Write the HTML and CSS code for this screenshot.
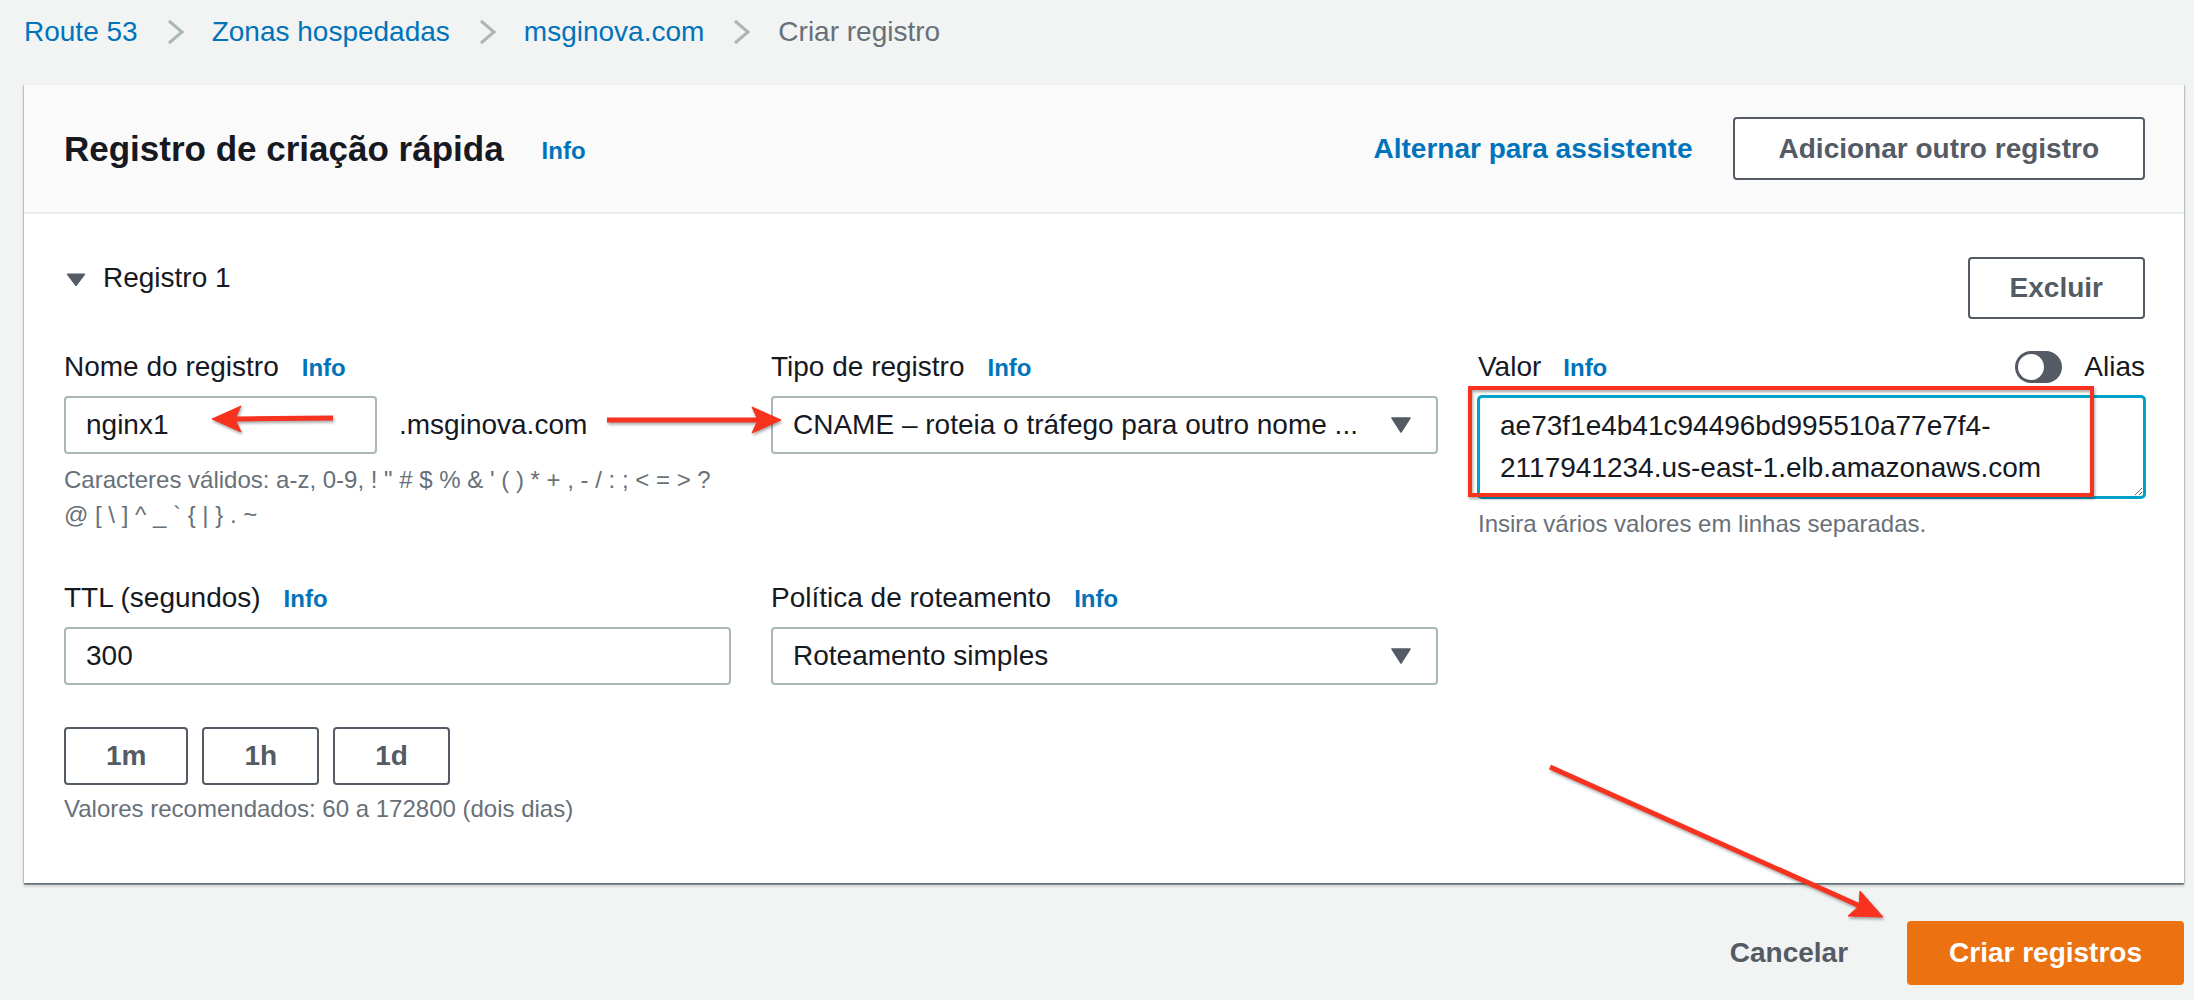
FILE: index.html
```html
<!DOCTYPE html>
<html lang="pt-BR">
<head>
<meta charset="utf-8">
<title>Criar registro</title>
<link rel="stylesheet" href="styles.css">
</head>
<body>
<div class="page">
  <nav class="crumbs">
    <a class="crumb link">Route 53</a>
    <svg class="chev" viewBox="0 0 17 26"><polyline points="2,2 15,13 2,24"/></svg>
    <a class="crumb link">Zonas hospedadas</a>
    <svg class="chev" viewBox="0 0 17 26"><polyline points="2,2 15,13 2,24"/></svg>
    <a class="crumb link">msginova.com</a>
    <svg class="chev" viewBox="0 0 17 26"><polyline points="2,2 15,13 2,24"/></svg>
    <span class="crumb current">Criar registro</span>
  </nav>

  <section class="card">
    <header class="card-head">
      <div class="title-wrap">
        <h1 class="title">Registro de criação rápida</h1>
        <a class="info">Info</a>
      </div>
      <div class="head-actions">
        <a class="link-bold">Alternar para assistente</a>
        <button class="btn btn-wide">Adicionar outro registro</button>
      </div>
    </header>

    <div class="card-body">
      <div class="rec-row">
        <div class="rec-title">
          <svg class="tri" viewBox="0 0 20 14"><polygon points="1,1 19,1 10,13"/></svg>
          <span>Registro 1</span>
        </div>
        <button class="btn">Excluir</button>
      </div>

      <div class="grid">
        <div class="field">
          <div class="label-row"><span class="label">Nome do registro</span><a class="info">Info</a></div>
          <div class="name-row">
            <input class="input name-input" value="nginx1" readonly>
            <span class="suffix">.msginova.com</span>
          </div>
          <p class="hint"><span class="nowrap">Caracteres válidos: a-z, 0-9, ! " # $ % &amp; ' ( ) * + , - / : ; &lt; = &gt; ?</span><br><span class="nowrap">@ [ \ ] ^ _ ` { | } . ~</span></p>
        </div>

        <div class="field">
          <div class="label-row"><span class="label">Tipo de registro</span><a class="info">Info</a></div>
          <div class="input select">
            <span class="select-text">CNAME – roteia o tráfego para outro nome ...</span>
            <svg class="caret" viewBox="0 0 20 16"><polygon points="1,1 19,1 10,15"/></svg>
          </div>
        </div>

        <div class="field">
          <div class="label-row spread">
            <div class="label-group"><span class="label">Valor</span><a class="info">Info</a></div>
            <div class="alias"><span class="toggle"><span class="knob"></span></span><span>Alias</span></div>
          </div>
          <textarea class="value-area" readonly>ae73f1e4b41c94496bd995510a77e7f4-
2117941234.us-east-1.elb.amazonaws.com</textarea>
          <p class="hint">Insira vários valores em linhas separadas.</p>
        </div>

        <div class="field">
          <div class="label-row"><span class="label">TTL (segundos)</span><a class="info">Info</a></div>
          <input class="input" value="300" readonly>
          <div class="quick">
            <button class="btn btn-sm">1m</button>
            <button class="btn btn-sm">1h</button>
            <button class="btn btn-sm">1d</button>
          </div>
          <p class="hint hint-quick">Valores recomendados: 60 a 172800 (dois dias)</p>
        </div>

        <div class="field">
          <div class="label-row"><span class="label">Política de roteamento</span><a class="info">Info</a></div>
          <div class="input select">
            <span class="select-text">Roteamento simples</span>
            <svg class="caret" viewBox="0 0 20 16"><polygon points="1,1 19,1 10,15"/></svg>
          </div>
        </div>
      </div>
    </div>
  </section>

  <div class="footer">
    <button class="btn-link">Cancelar</button>
    <button class="btn btn-primary">Criar registros</button>
  </div>
</div>

<svg class="annot" viewBox="0 0 2194 1000" aria-hidden="true">
  <g class="red">
    <line x1="333" y1="418" x2="234" y2="419" />
    <polygon points="212,419 241,406 235,419 241,432"/>
    <line x1="607" y1="420" x2="758" y2="420" />
    <polygon points="781,420 752,407 758,420 752,433"/>
    <line x1="1550" y1="767" x2="1860" y2="906" />
    <polygon points="1883,917 1848,916 1859,906 1860,891"/>
  </g>
  <rect class="redbox" x="1470" y="388" width="622" height="107"/>
</svg>
</body>
</html>
```

FILE: styles.css
```css
* {
  box-sizing: border-box;
  margin: 0;
  padding: 0;
}

html, body {
  background: #f2f3f3;
}

body {
  position: relative;
  width: 2194px;
  height: 1000px;
  overflow: hidden;
  font-family: "Liberation Sans", Arial, sans-serif;
  font-size: 28px;
  line-height: 42px;
  color: #16191f;
}

.page {
  padding: 11px 10px 0 24px;
}

/* breadcrumbs */
.crumbs {
  display: flex;
  align-items: center;
  height: 42px;
  white-space: nowrap;
}

.crumb.link {
  color: #0073bb;
}

.crumb.current {
  color: #687078;
}

.chev {
  width: 17px;
  height: 26px;
  margin: 0 28px 0 29px;
  fill: none;
  stroke: #aab7b8;
  stroke-width: 3;
}

/* card */
.card {
  margin-top: 31px;
  background: #fff;
  border-top: 1px solid #eaeded;
  box-shadow: 0 2px 0 0 rgba(0, 28, 36, 0.32), 0 3px 3px 0 rgba(0, 28, 36, 0.2), 1px 1px 1px 0 rgba(0, 28, 36, 0.15), -1px 1px 1px 0 rgba(0, 28, 36, 0.15);
}

.card-head {
  height: 129px;
  display: flex;
  align-items: center;
  justify-content: space-between;
  padding: 0 39px 0 40px;
  background: #fafafa;
  border-bottom: 2px solid #eaeded;
}

.title-wrap {
  display: flex;
  align-items: center;
  gap: 38px;
}

.title {
  font-size: 35px;
  font-weight: 700;
  line-height: 44px;
  color: #16191f;
}

.info {
  font-size: 24px;
  font-weight: 700;
  color: #0073bb;
}

.title-wrap .info {
  margin-top: 4px;
}

.head-actions {
  display: flex;
  align-items: center;
  gap: 40px;
}

.link-bold {
  font-weight: 700;
  color: #0073bb;
}

.btn {
  height: 62px;
  padding: 0 40px;
  border: 2px solid #545b64;
  border-radius: 4px;
  background: #fff;
  color: #545b64;
  font-family: inherit;
  font-size: 28px;
  font-weight: 700;
  line-height: 1;
  white-space: nowrap;
}

.btn-wide {
  height: 63px;
  padding: 0 44px;
}

.card-body {
  padding: 43px 39px 57px 40px;
}

.rec-row {
  display: flex;
  justify-content: space-between;
  align-items: flex-start;
}

.rec-title {
  display: flex;
  align-items: center;
  height: 42px;
  gap: 17px;
}

.tri {
  width: 20px;
  height: 14px;
  margin-left: 2px;
  margin-top: 4px;
  fill: #545b64;
  stroke: #545b64;
  stroke-linejoin: round;
  stroke-width: 1;
}

.grid {
  margin-top: 27px;
  display: grid;
  grid-template-columns: repeat(3, 1fr);
  column-gap: 40px;
  row-gap: 36px;
}

.field {
  display: flex;
  flex-direction: column;
  min-width: 0;
}

.label-row {
  display: flex;
  align-items: center;
  gap: 23px;
  height: 42px;
  margin-bottom: 8px;
}

.label-row.spread {
  justify-content: space-between;
}

.label-group {
  display: flex;
  align-items: center;
  gap: 22px;
}

.label-row .info {
  margin-top: 2px;
}

.input {
  height: 58px;
  width: 100%;
  padding: 0 20px;
  border: 2px solid #aab7b8;
  border-radius: 4px;
  background: #fff;
  font-family: inherit;
  font-size: 28px;
  color: #16191f;
  outline: none;
}

.name-row {
  display: flex;
  align-items: center;
  gap: 22px;
}

.name-input {
  width: 313px;
  flex: none;
}

.suffix {
  white-space: nowrap;
}

.hint {
  margin-top: 8px;
  font-size: 24px;
  line-height: 35px;
  color: #687078;
}

.nowrap {
  white-space: nowrap;
}

.select {
  display: flex;
  align-items: center;
  gap: 16px;
  padding: 0 25px 0 20px;
}

.select-text {
  flex: 1;
  min-width: 0;
  white-space: nowrap;
  overflow: hidden;
  text-overflow: ellipsis;
}

.caret {
  flex: none;
  width: 20px;
  height: 16px;
  fill: #545b64;
  stroke: #545b64;
  stroke-width: 1.5;
  stroke-linejoin: round;
}

.alias {
  display: flex;
  align-items: center;
  gap: 22px;
}

.toggle {
  display: flex;
  align-items: center;
  width: 47px;
  height: 32px;
  padding: 0 3px;
  border-radius: 16px;
  background: #545b64;
}

.knob {
  width: 26px;
  height: 26px;
  border-radius: 50%;
  background: #fff;
  box-shadow: 0 0 1px rgba(0, 0, 0, 0.4);
}

.value-area {
  display: block;
  width: 100%;
  height: 102px;
  padding: 7px 20px;
  border: 2px solid #00a1c9;
  border-radius: 4px;
  box-shadow: 0 0 0 1px #00a1c9;
  font-family: inherit;
  font-size: 28px;
  line-height: 42px;
  color: #16191f;
  background: #fff;
  resize: vertical;
  overflow: hidden;
  outline: none;
}

.quick {
  display: flex;
  gap: 14px;
  margin-top: 42px;
}

.btn-sm {
  height: 58px;
}

.hint-quick {
  margin-top: 6px;
}

/* footer */
.footer {
  margin-top: 38px;
  display: flex;
  justify-content: flex-end;
  align-items: center;
  gap: 19px;
}

.btn-link {
  height: 64px;
  padding: 0 40px;
  border: none;
  background: transparent;
  color: #545b64;
  font-family: inherit;
  font-size: 28px;
  font-weight: 700;
}

.btn-primary {
  height: 64px;
  background: #ec7211;
  border-color: #ec7211;
  color: #fff;
}

/* annotations */
.annot {
  position: absolute;
  top: 0;
  left: 0;
  width: 2194px;
  height: 1000px;
  pointer-events: none;
  filter: drop-shadow(1px 2px 1.5px rgba(0, 0, 0, 0.35));
}

.red line {
  stroke: #f7321f;
  stroke-width: 5;
  stroke-linecap: butt;
}

.red polygon {
  fill: #f7321f;
  stroke: #f7321f;
  stroke-width: 1;
  stroke-linejoin: round;
}

.redbox {
  fill: none;
  stroke: #f7321f;
  stroke-width: 4;
}
```
